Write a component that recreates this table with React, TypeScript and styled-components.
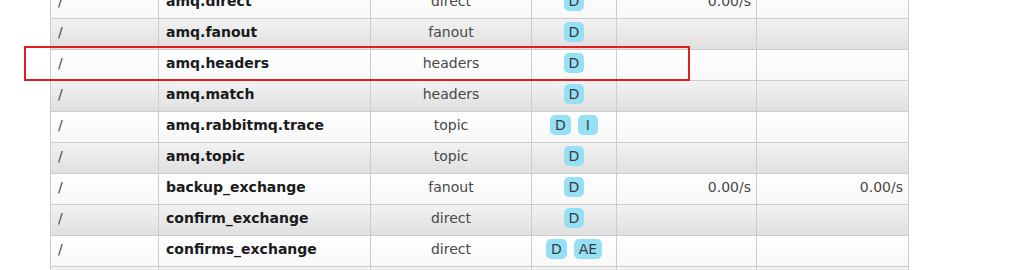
import React from "react";
import styled, { createGlobalStyle } from "styled-components";

const GlobalStyle = createGlobalStyle`
  html, body {
    margin: 0;
    padding: 0;
    background: #fff;
    overflow: hidden;
  }
  body {
    font-family: "DejaVu Sans", Verdana, sans-serif;
    font-size: 14px;
    color: #484848;
  }
`;

const Page = styled.div`
  position: relative;
  margin-top: -13px;
  padding-left: 50px;
`;

const Table = styled.table`
  border-collapse: collapse;
  table-layout: fixed;
  width: 859px;
`;

const Row = styled.tr<{ $alt: boolean }>`
  background: ${(p) =>
    p.$alt
      ? "linear-gradient(#f2f2f2, #dfdfdf)"
      : "linear-gradient(#ffffff, #f7f7f7)"};
`;

const Cell = styled.td<{ $align?: "left" | "center" | "right" }>`
  height: 26px;
  padding: 0 7px 4px;
  border: 1px solid #cccccc;
  text-align: ${(p) => p.$align || "left"};
  white-space: nowrap;
  vertical-align: middle;
`;

const NameCell = styled(Cell)`
  font-weight: bold;
  color: #1a1a1a;
`;

const RateCell = styled(Cell)`
  padding-right: 5px;
`;

const Badges = styled.div`
  display: flex;
  justify-content: center;
  gap: 7px;
`;

const Badge = styled.span`
  display: inline-block;
  min-width: 10px;
  height: 20px;
  line-height: 21px;
  padding: 0 5px;
  border-radius: 5px;
  background: #96e0f5;
  color: #3a3a3a;
  text-align: center;
`;

const Highlight = styled.div`
  position: absolute;
  left: 24px;
  top: 59px;
  width: 662px;
  height: 31px;
  border: 2px solid #e01f1f;
  pointer-events: none;
`;

type Exchange = {
  vhost: string;
  name: string;
  type: string;
  features: string[];
  rateIn?: string;
  rateOut?: string;
};

const exchanges: Exchange[] = [
  { vhost: "/", name: "amq.direct", type: "direct", features: ["D"], rateIn: "0.00/s" },
  { vhost: "/", name: "amq.fanout", type: "fanout", features: ["D"] },
  { vhost: "/", name: "amq.headers", type: "headers", features: ["D"] },
  { vhost: "/", name: "amq.match", type: "headers", features: ["D"] },
  { vhost: "/", name: "amq.rabbitmq.trace", type: "topic", features: ["D", "I"] },
  { vhost: "/", name: "amq.topic", type: "topic", features: ["D"] },
  { vhost: "/", name: "backup_exchange", type: "fanout", features: ["D"], rateIn: "0.00/s", rateOut: "0.00/s" },
  { vhost: "/", name: "confirm_exchange", type: "direct", features: ["D"] },
  { vhost: "/", name: "confirms_exchange", type: "direct", features: ["D", "AE"] },
  { vhost: "/", name: "dead_letter_exchange", type: "direct", features: ["D"] },
];

export default function App() {
  return (
    <>
      <GlobalStyle />
      <Page>
        <Table>
          <colgroup>
            <col style={{ width: 108 }} />
            <col style={{ width: 212 }} />
            <col style={{ width: 161 }} />
            <col style={{ width: 85 }} />
            <col style={{ width: 140 }} />
            <col style={{ width: 152 }} />
          </colgroup>
          <tbody>
            {exchanges.map((ex, i) => (
              <Row key={ex.name} $alt={i % 2 === 1}>
                <Cell>{ex.vhost}</Cell>
                <NameCell>{ex.name}</NameCell>
                <Cell $align="center">{ex.type}</Cell>
                <Cell $align="center">
                  <Badges>
                    {ex.features.map((f) => (
                      <Badge key={f}>{f}</Badge>
                    ))}
                  </Badges>
                </Cell>
                <RateCell $align="right">{ex.rateIn}</RateCell>
                <RateCell $align="right">{ex.rateOut}</RateCell>
              </Row>
            ))}
          </tbody>
        </Table>
        <Highlight />
      </Page>
    </>
  );
}
